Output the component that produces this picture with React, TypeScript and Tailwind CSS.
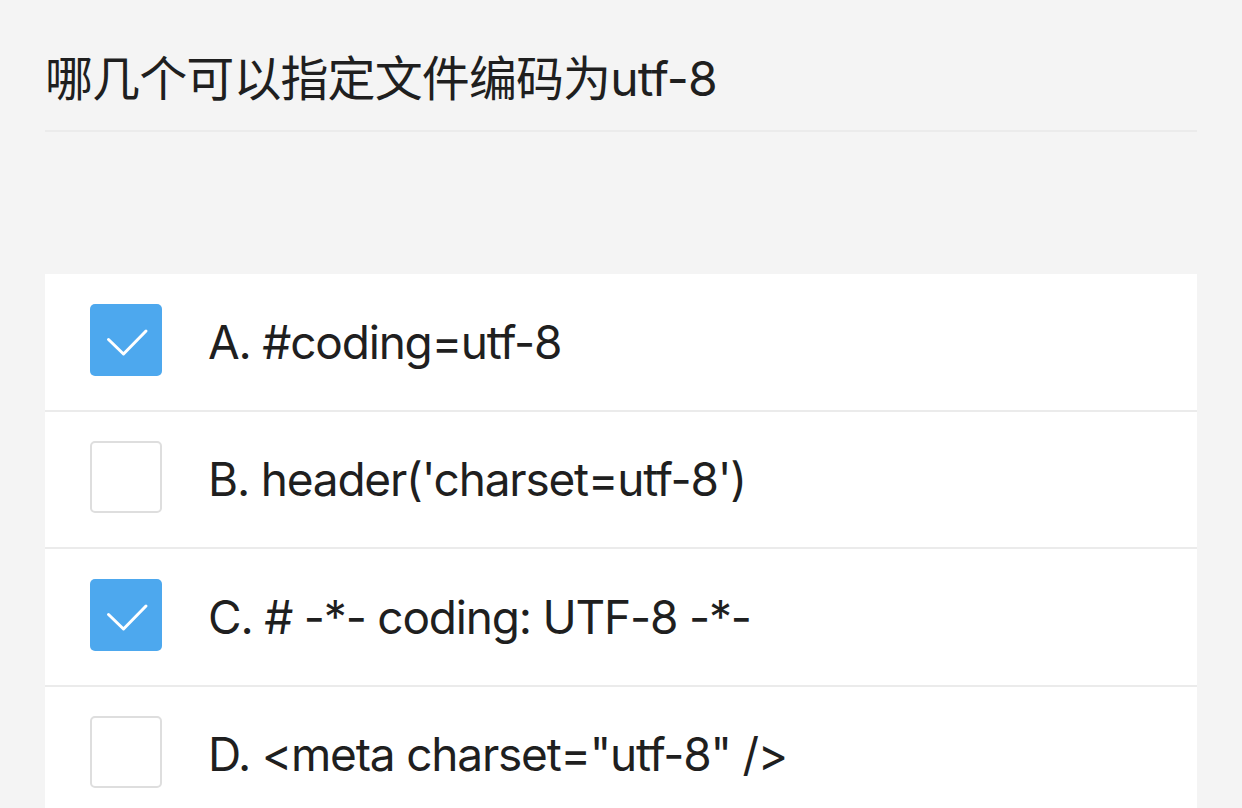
const options = [
  { key: 'A', text: '#coding=utf-8', checked: true },
  { key: 'B', text: "header('charset=utf-8')", checked: false },
  { key: 'C', text: '# -*- coding: UTF-8 -*-', checked: true },
  { key: 'D', text: '<meta charset="utf-8" />', checked: false },
];

function CheckBox({ checked }: { checked: boolean }) {
  if (checked) {
    return (
      <div className="mb-[4px] flex h-[72px] w-[72px] shrink-0 items-center justify-center rounded-[5px] bg-[#4da8ee]">
        <svg width="72" height="72" viewBox="0 0 72 72" fill="none">
          <path d="M18.5 35.5 L33.5 50 L56 27" stroke="white" strokeWidth="3" strokeLinecap="round" strokeLinejoin="round" />
        </svg>
      </div>
    );
  }
  return <div className="mb-[4px] h-[72px] w-[72px] shrink-0 rounded-[5px] border-2 border-[#dedede] bg-white" />;
}

export default function App() {
  return (
    <div className="min-h-[808px] bg-[#f4f4f4] px-[45px] text-[#1f1f1f] [font-family:Inter,'Noto_Sans_CJK_SC',sans-serif]">
      <div className="flex h-[130px] items-center pt-[28px] text-[48px] leading-none tracking-[-0.9px]">
        哪几个可以指定文件编码为utf-8
      </div>
      <div className="h-[2px] bg-[#ebebeb]" />
      <div className="mt-[142px]">
        {options.map((o) => (
          <div
            key={o.key}
            className="flex h-[137.5px] items-center gap-[46px] border-b-2 border-[#ebebeb] bg-white pl-[45px]"
          >
            <CheckBox checked={o.checked} />
            <span className="text-[46px] leading-none tracking-[-1.2px]">
              {o.key}. {o.text}
            </span>
          </div>
        ))}
      </div>
    </div>
  );
}
